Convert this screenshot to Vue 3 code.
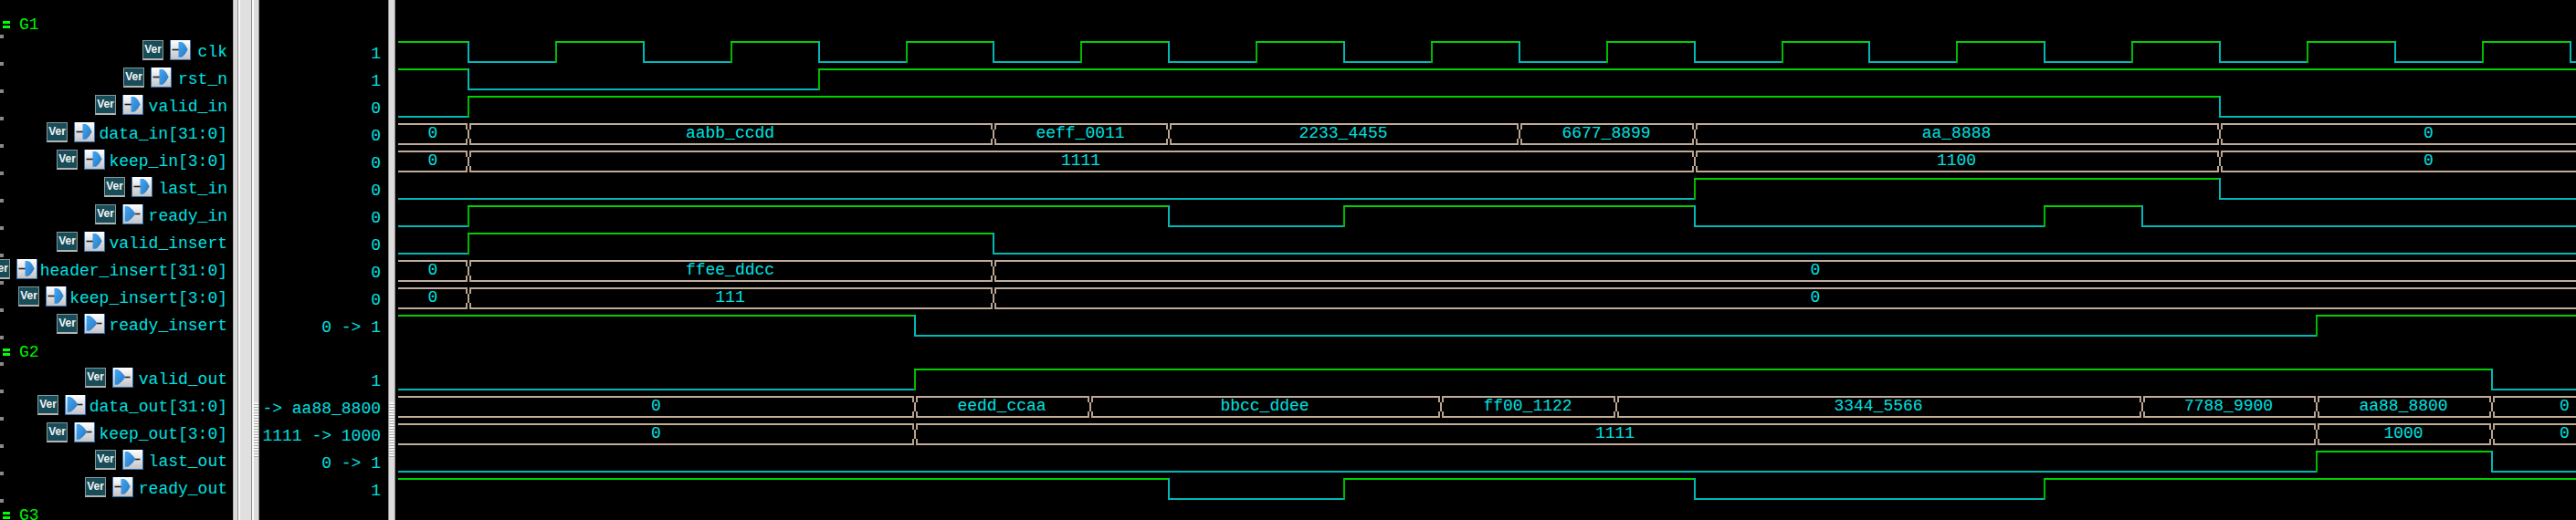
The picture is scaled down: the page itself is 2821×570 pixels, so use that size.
<script setup>
const VIEW_START = 436
const VIEW_END = 2889
const HALF_PERIOD = 95.9

// Tick n of the clock on the time axis, counted in half periods from the first falling edge
const at = (n) => Math.round(512 + HALF_PERIOD * n)

const segments = (first, changes) => {
  const marks = [[VIEW_START, first], ...changes]
  return marks.map(([start, value], i) => ({
    value,
    span: (i + 1 < marks.length ? marks[i + 1][0] : VIEW_END) - start,
  }))
}

const bit = (name, dir, value, first, times) => ({
  name, dir, value, kind: 'bit',
  segments: segments(first, times.map((t, i) => [t, (first + i + 1) % 2])),
})

const bus = (name, dir, value, first, changes) => ({
  name, dir, value, kind: 'bus', segments: segments(first, changes),
})

const clockEdges = Array.from({ length: 25 }, (_, n) => at(n))

const groups = [
  {
    name: 'G1',
    signals: [
      bit('clk', 'in', '1', 1, clockEdges),
      bit('rst_n', 'in', '1', 1, [at(0), at(4)]),
      bit('valid_in', 'in', '0', 0, [at(0), at(20)]),
      bus('data_in[31:0]', 'in', '0', '0', [[at(0), 'aabb_ccdd'], [at(6), 'eeff_0011'], [at(8), '2233_4455'], [at(12), '6677_8899'], [at(14), 'aa_8888'], [at(20), '0']]),
      bus('keep_in[3:0]', 'in', '0', '0', [[at(0), '1111'], [at(14), '1100'], [at(20), '0']]),
      bit('last_in', 'in', '0', 0, [at(14), at(20)]),
      bit('ready_in', 'out', '0', 0, [at(0), at(8), at(10), at(14), at(18), 2345]),
      bit('valid_insert', 'in', '0', 0, [at(0), at(6)]),
      bus('header_insert[31:0]', 'in', '0', '0', [[at(0), 'ffee_ddcc'], [at(6), '0']]),
      bus('keep_insert[3:0]', 'in', '0', '0', [[at(0), '111'], [at(6), '0']]),
      bit('ready_insert', 'out', '0 -> 1', 1, [1001, 2536]),
    ],
  },
  {
    name: 'G2',
    signals: [
      bit('valid_out', 'out', '1', 0, [1001, 2728]),
      bus('data_out[31:0]', 'out', '-> aa88_8800', '0', [[1001, 'eedd_ccaa'], [1193, 'bbcc_ddee'], [1577, 'ff00_1122'], [1769, '3344_5566'], [2345, '7788_9900'], [2536, 'aa88_8800'], [2728, '0']]),
      bus('keep_out[3:0]', 'out', '1111 -> 1000', '0', [[1001, '1111'], [2536, '1000'], [2728, '0']]),
      bit('last_out', 'out', '0 -> 1', 0, [2536, 2728]),
      bit('ready_out', 'in', '1', 1, [at(8), at(10), at(14), at(18)]),
    ],
  },
  { name: 'G3', signals: [] },
]

// Icons line up with the character grid of the signal names
const nameWidth = (name) => Math.round(name.length * 10.5) + 'px'
</script>

<template>
  <main class="viewer">
    <section class="names" aria-label="Signals">
      <svg class="defs" aria-hidden="true">
        <defs>
          <linearGradient id="face" x1="0" y1="0" x2="0" y2="1">
            <stop offset="0" stop-color="#ffffff" />
            <stop offset="1" stop-color="#c4c4c8" />
          </linearGradient>
          <linearGradient id="port" x1="0" y1="0" x2="1" y2="1">
            <stop offset="0" stop-color="#45a8f4" />
            <stop offset="1" stop-color="#2676bf" />
          </linearGradient>
        </defs>
      </svg>
      <div v-for="group in groups" :key="group.name">
        <div class="row group">
          <span class="fold"></span>
          <span>{{ group.name }}</span>
        </div>
        <div v-for="s in group.signals" :key="s.name" class="row signal">
          <span class="lang">Ver</span>
          <svg class="port" viewBox="0 0 23 22" aria-hidden="true">
            <rect width="23" height="22" fill="#2f6fae" />
            <rect x="1" width="21" height="21" fill="url(#face)" />
            <template v-if="s.dir === 'in'">
              <path d="M2.5 10.5H10" stroke="#222" stroke-width="1.6" />
              <path d="M9.5 2H13Q17 4 19.5 10.3Q17 16.5 13 18.7H9.5Z" fill="url(#port)" />
            </template>
            <template v-else>
              <path d="M14 10.5H19.5" stroke="#222" stroke-width="1.6" />
              <path d="M2.7 2H6Q10 4 14.5 10.3Q10 16.5 6 18.7H2.7Z" fill="url(#port)" />
            </template>
          </svg>
          <span class="name" :style="{ width: nameWidth(s.name) }">{{ s.name }}</span>
        </div>
      </div>
    </section>

    <div class="splitter plain"></div>
    <div class="splitter wide"></div>
    <div class="splitter"><span class="grip"></span></div>

    <section class="values" aria-label="Values">
      <div v-for="group in groups" :key="group.name">
        <div class="row group"></div>
        <div v-for="s in group.signals" :key="s.name" class="row value">{{ s.value }}</div>
      </div>
    </section>

    <div class="splitter last"><span class="grip"></span></div>

    <section class="waves" aria-label="Waveforms">
      <div class="timeline">
        <div v-for="group in groups" :key="group.name">
          <div class="row group"></div>
          <div v-for="s in group.signals" :key="s.name" class="row">
            <div class="wave" :class="s.kind">
              <div
                v-for="(seg, i) in s.segments"
                :key="i"
                class="seg"
                :class="s.kind === 'bit' ? (seg.value ? 'high' : 'low') : 'data'"
                :style="{ flexGrow: seg.span }"
              >
                <template v-if="s.kind === 'bus'">
                  <svg v-if="i > 0" class="cross" viewBox="0 0 6 24" aria-hidden="true">
                    <rect width="6" height="24" fill="#000" />
                    <path d="M0 1H1V7M6 1H5V7M0 23H1V17M6 23H5V17" />
                    <path d="M3 7V17" />
                  </svg>
                  <span>{{ seg.value }}</span>
                </template>
              </div>
            </div>
          </div>
        </div>
      </div>
    </section>
  </main>
</template>

<style>
body {
  margin: 0;
  background: #000;
}
</style>

<style scoped>
.viewer {
  display: flex;
  height: 100vh;
  overflow: hidden;
  background: #000;
  color: #00e0e0;
  font: 18px/20px "Liberation Mono", monospace;
  white-space: nowrap;
}

.names,
.values,
.waves {
  box-sizing: border-box;
  padding-top: 11px;
  overflow: hidden;
}

.names {
  flex: none;
  width: 255px;
}

.values {
  flex: none;
  width: 141px;
}

.waves {
  flex: 1;
  min-width: 0;
  padding-left: 3px;
}

.defs {
  position: absolute;
  width: 0;
  height: 0;
}

.row {
  box-sizing: border-box;
  display: flex;
  align-items: center;
  height: 30px;
}

.row.group {
  height: 29px;
  gap: 10px;
  padding: 2px 0 0 3px;
  color: #00f000;
}

.names .row {
  position: relative;
}

.names .row::after {
  content: "";
  position: absolute;
  left: 0;
  bottom: -2px;
  width: 4px;
  height: 4px;
  background: #888;
}

.fold {
  width: 8px;
  height: 2px;
  border: solid #00ff00;
  border-width: 3px 0;
}

.signal {
  justify-content: flex-end;
  padding-right: 6px;
}

.signal > * {
  flex: none;
}

.lang {
  box-sizing: border-box;
  width: 23px;
  height: 22px;
  margin-right: 7px;
  border: 1px solid #84989c;
  border-bottom: 2px solid #b4b4b4;
  background: #184c58;
  color: #f4f4f4;
  font: bold 12px/19px "Liberation Sans", sans-serif;
  text-align: center;
}

.port {
  width: 23px;
  height: 22px;
  margin-right: 8px;
}

.name {
  display: flex;
  justify-content: flex-end;
  padding-top: 4px;
}

.value {
  justify-content: flex-end;
  padding: 7px 8px 0 0;
}

.splitter {
  box-sizing: border-box;
  flex: none;
  display: flex;
  align-items: flex-start;
  width: 8px;
  border-left: 2px solid #f8f8f8;
  border-right: 1px solid #8c8c8c;
  background: #dcdcdc;
}

.splitter.plain {
  width: 6px;
  border-left: 1px solid #b0b0b0;
}

.splitter.wide {
  width: 15px;
  background: #e0e0e0;
}

.splitter.last {
  border-left: 1px solid #8c8c8c;
}

.grip {
  flex: 1;
  height: 60px;
  margin-top: 441px;
  background: repeating-linear-gradient(#f4f4f4 0 2px, #a8a8a8 2px 3px);
}

/* The visible time range runs a little past the right edge of the window */
.timeline {
  width: calc(100% + 68px);
}

.wave {
  display: flex;
  flex: 1;
  height: 24px;
  padding-top: 4px;
}

.seg {
  box-sizing: border-box;
  flex: 1 1 0;
  min-width: 0;
}

.high {
  border-top: 2px solid #00d000;
}

.low {
  border-bottom: 2px solid #00b8b8;
}

.low + .high {
  box-shadow: inset 2px 0 #00b800;
}

.high + .low {
  box-shadow: inset 2px 0 #00b8b8;
}

.data {
  position: relative;
  border: solid #c0ac98;
  border-width: 2px 0;
  line-height: 19px;
  text-align: center;
}

.cross {
  position: absolute;
  top: -2px;
  left: -2px;
  width: 6px;
  height: 24px;
}

.cross path {
  fill: none;
  stroke: #b8a490;
  stroke-width: 2;
}
</style>
